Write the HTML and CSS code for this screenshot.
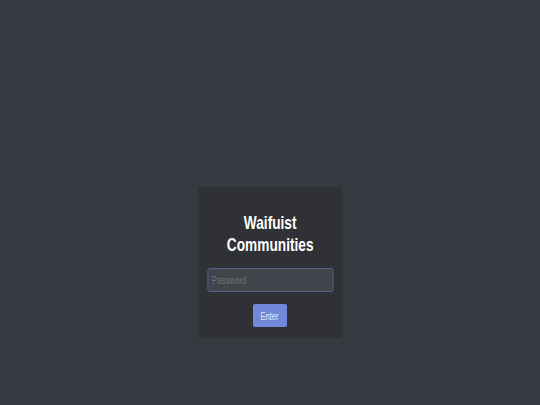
FILE: index.html
```html
<!DOCTYPE html>
<html>
<head>
<meta charset="utf-8">
<link rel="stylesheet" href="styles.css">
</head>
<body>
<main class="page">
  <form class="card">
    <h1 class="title"><span class="narrow">Waifuist<br>Communities</span></h1>
    <input class="password" type="password" placeholder="Password">
    <button class="enter" type="button"><span class="narrow">Enter</span></button>
  </form>
</main>
</body>
</html>
```

FILE: styles.css
```css
html, body {
  margin: 0;
  padding: 0;
  background: #36393f;
  height: 100%;
}
.page {
  display: flex;
  justify-content: center;
  padding-top: 187px;
  font-family: "Liberation Sans", Arial, sans-serif;
}
.card {
  width: 144px;
  box-sizing: border-box;
  background: #2f3136;
  border-radius: 4px;
  padding: 25px 9px 11px;
  display: flex;
  flex-direction: column;
  align-items: center;
}
.narrow {
  display: inline-block;
  transform: scaleX(0.72);
}
.title {
  margin: 0 0 12px;
  color: #ffffff;
  font-size: 19px;
  line-height: 22px;
  font-weight: bold;
  text-align: center;
  white-space: nowrap;
}
.password {
  flex: none;
  width: 175px;
  height: 24px;
  box-sizing: border-box;
  transform: scaleX(0.72);
  background: #40444b;
  border: 1px solid #5b6794;
  border-radius: 3px;
  color: #dcddde;
  font-family: inherit;
  font-size: 11px;
  padding: 0 5px;
  outline: none;
}
.password::placeholder {
  color: #6f737a;
}
.enter {
  margin-top: 12px;
  width: 34px;
  height: 23px;
  background: #7289da;
  border: none;
  border-radius: 2px;
  color: #e3e7f8;
  font-family: inherit;
  font-size: 10.5px;
  padding: 0;
}
```
